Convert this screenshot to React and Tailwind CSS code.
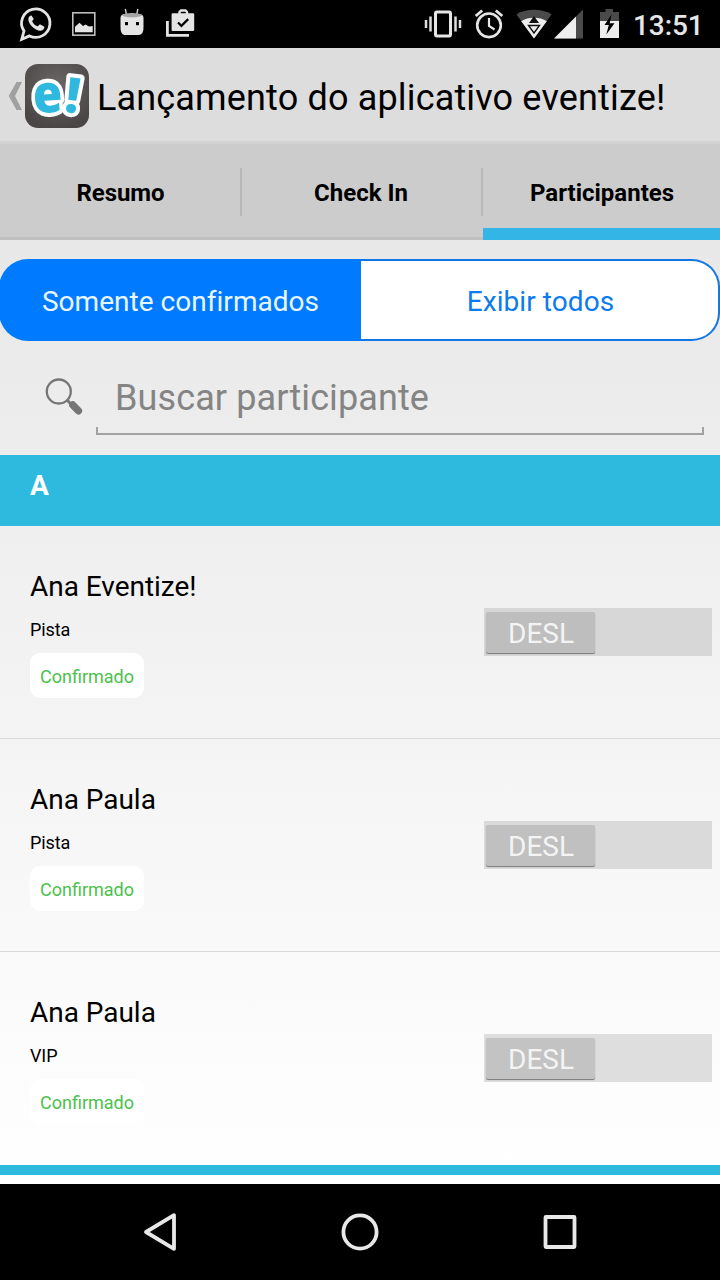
import React from "react";

const people = [
  { name: "Ana Eventize!", ticket: "Pista", thumb: "bg-[#bebebe]", track: "bg-[#d7d7d7]" },
  { name: "Ana Paula", ticket: "Pista", thumb: "bg-[#c0c0c0]", track: "bg-[#dadada]" },
  { name: "Ana Paula", ticket: "VIP", thumb: "bg-[#c3c3c3]", track: "bg-[#dedede]" },
];

function StatusBar() {
  return (
    <header className="flex h-12 shrink-0 items-center justify-between bg-black">
      <svg width="240" height="48" viewBox="0 0 240 48" fill="none">
        <path d="M21.700 39.300l2.300-8.200A14.200 14.200 0 1 1 29.500 35.900z" stroke="#e4e4e4" strokeWidth="2.800" />
        <path d="M31.500 15.600c-1-.3-3.200 1-3.200 3.700 0 4.700 6.700 11.600 12 11.500 2.300 0 4.200-1.800 4.100-4l-4.400-2.500c-1 .3-1.500 2.200-2.600 2-2.200-.7-4.300-2.900-5.200-4.900 0-.9 1.500-1.500 1.500-2.300z" fill="#e4e4e4" />
        <rect x="72.800" y="12.800" width="22" height="22.400" stroke="#bdbdbd" strokeWidth="1.600" />
        <path d="M75 32.300v-5.500l4.500-4 3.500 3.200 2.500-1.500 3.500 2 3.700-.5v6.300z" fill="#e4e4e4" />
        <path d="M126.500 14.500l-1.200-5.500M136.700 14.500l1.200-5.500" stroke="#cfcfcf" strokeWidth="1.400" />
        <path d="M120.500 18c0-2 1-3.500 3-3.800h17c2 .3 3 1.800 3 3.800v9c0 5.500-1.500 7.800-5 8h-13c-3.500 0-5-2.500-5-8z" fill="#e4e4e4" />
        <path d="M122 15.300c2-3 18-3 20 0-2 2.800-18 2.800-20 0z" fill="#a5a5a5" />
        <rect x="125" y="22" width="3" height="3.200" fill="#000" />
        <rect x="136" y="22" width="3" height="3.200" fill="#000" />
        <path d="M167.400 21v14.400H189" stroke="#e4e4e4" strokeWidth="2.800" />
        <rect x="171.600" y="13.300" width="22.600" height="17.700" rx="1.200" fill="#e4e4e4" />
        <path d="M179.500 14v-2l1.500-1.500h4.500l1.500 1.500v2" stroke="#e4e4e4" strokeWidth="2.400" />
        <path d="M178 22.500l3.400 3.400 6.800-6.800" stroke="#000" strokeWidth="2.200" />
      </svg>
      <div className="flex items-center pr-[17px]">
        <svg width="223" height="48" viewBox="410 0 223 48" fill="none">
          <rect x="435.500" y="12" width="15" height="24" rx="1.500" stroke="#e6e6e6" strokeWidth="3" />
          <path d="M426 20v8M460 20v8M430.500 16.500v15M455.500 16.500v15" stroke="#dedede" strokeWidth="2.500" />
          <circle cx="489" cy="25.300" r="11.800" stroke="#e6e6e6" strokeWidth="2.600" />
          <path d="M489 18v8l5.500 3.500" stroke="#e6e6e6" strokeWidth="2.200" />
          <path d="M475.700 16l6.500-5.500M502.300 16l-6.500-5.500" stroke="#e6e6e6" strokeWidth="2.800" />
          <path d="M534 38.500L516.500 14.500c9-6.200 26-6.200 35 0z" fill="#4a4a4a" />
          <path d="M534 38.500l-12.800-17.300c7-4.600 18.600-4.600 25.600 0z" fill="#eee" />
          <path d="M534 16l-5 7h10z" fill="#111" />
          <path d="M528.500 25.500h11l-5.500 7.500z" fill="#eee" stroke="#111" strokeWidth="1.400" />
          <path d="M583 9.500v29h-29z" fill="#4a4a4a" />
          <path d="M576 16.500v22h-22z" fill="#eee" />
          <path d="M600 12h5.500V9h7.500v3h6v9h-19z" fill="#4a4a4a" />
          <path d="M600 21h19v17h-19z" fill="#eee" />
          <path d="M611.500 14.500L604.500 25h4.300l-2.500 9.500 8.200-11.300h-4.800z" fill="#000" />
        </svg>
        <span className="flex h-12 w-[70px] items-center whitespace-nowrap pt-[3px] text-[28px] font-medium leading-none tracking-[-0.1px] text-[#e6e6e6]">13:51</span>
      </div>
    </header>
  );
}

function AppIcon() {
  return (
    <svg className="overflow-visible" width="64" height="64" viewBox="0 0 64 64">
      <defs>
        <radialGradient id="tile" cx="50%" cy="35%" r="65%">
          <stop offset="0" stopColor="#6c6867" />
          <stop offset="1" stopColor="#4a4646" />
        </radialGradient>
      </defs>
      <rect width="64" height="64" rx="13" fill="url(#tile)" />
      <g fontFamily="'Open Sans', sans-serif" fontWeight="800" fill="#2fb9df" stroke="#fff" strokeWidth="8" strokeLinejoin="round" style={{ paintOrder: "stroke" }}>
        <text fontSize="49" transform="translate(38.500 47.500) rotate(8)">!</text>
        <text fontSize="53" transform="translate(9 49.500) rotate(-4) scale(0.900 1)">e</text>
      </g>
    </svg>
  );
}

function ActionBar() {
  return (
    <div className="flex h-24 shrink-0 items-center border-b-[3px] border-[#d3d3d3] bg-[#dddddd] pt-[3px]">
      <svg className="ml-2 mr-[3px]" width="14" height="32" viewBox="0 0 14 32">
        <path d="M8.500 2H14L7 16l7 14H8.500L.7 16z" fill="#a0a0a0" />
      </svg>
      <AppIcon />
      <h1 className="ml-2 whitespace-nowrap pt-1 text-[36px] leading-none tracking-[0.160px] text-black">Lançamento do aplicativo eventize!</h1>
    </div>
  );
}

function Tabs() {
  return (
    <nav className="flex h-24 shrink-0 bg-[#cccccc] text-[24px] font-bold leading-none text-black">
      <div className="flex w-60 items-center justify-center border-b-[3px] border-[#c0c0c0] pl-px pt-1 tracking-[-0.100px]">Resumo</div>
      <div className="flex w-[243px] items-center border-b-[3px] border-[#c0c0c0] pt-0.5">
        <span className="h-12 w-0.5 bg-[#b8b8b8]" />
        <span className="flex-1 pr-px pt-0.5 text-center">Check In</span>
        <span className="h-12 w-0.5 bg-[#b8b8b8]" />
      </div>
      <div className="flex flex-1 items-center justify-center border-b-12 border-[#33b5e5] pl-px pt-[13px]">Participantes</div>
    </nav>
  );
}

function Participant({ name, ticket, thumb, track, last }) {
  return (
    <li className={last ? "flex h-[213px] justify-between pl-[30px] pr-2" : "flex h-[213px] justify-between border-b border-[#d9d9d9] pl-[30px] pr-2"}>
      <div className="flex flex-col items-start pt-[44px]">
        <span className="text-[28px] leading-[33px] tracking-[-0.030px] text-black">{name}</span>
        <span className="mt-[16px] text-[18px] leading-[22px] tracking-[-0.100px] text-black">{ticket}</span>
        <span className="mt-[12px] flex h-[45px] w-[114px] items-center justify-center rounded-[10px] bg-white pt-px text-[18px] text-[#4bc14b]">Confirmado</span>
      </div>
      <div className={"mt-[82px] flex h-12 w-[228px] pl-0.5 pt-1 " + track}>
        <span className={"flex h-[41px] w-[109px] items-center justify-center rounded-[2px] pl-px pt-[3px] text-[28px] leading-none text-[#f4f4f4] shadow-[0_1px_1px_#777] " + thumb}>DESL</span>
      </div>
    </li>
  );
}

export default function App() {
  return (
    <div className="flex h-[1280px] w-[720px] flex-col overflow-hidden bg-black font-[Roboto,sans-serif]">
      <StatusBar />
      <ActionBar />
      <Tabs />
      <main className="flex h-[944px] shrink-0 flex-col bg-linear-to-b from-[#e8e8e8] to-white">
        <div className="mt-[19px] flex h-[82px] shrink-0 text-[28px] leading-none">
          <button className="-ml-px w-[362px] rounded-l-[29px] bg-[#007aff] pl-px pt-[3px] tracking-[0.030px] text-[#e8f6ff]">Somente confirmados</button>
          <button className="flex-1 rounded-r-[28px] border-2 border-l-0 border-[#1276e4] bg-white pl-0.5 pt-[3px] tracking-[0.080px] text-[#0d7bf0]">Exibir todos</button>
        </div>
        <div className="flex h-[114px] shrink-0 pl-[44px] pr-4 pt-[36px]">
          <svg width="40" height="40" viewBox="44 377 40 40" fill="none">
            <circle cx="58.800" cy="391.500" r="12" stroke="#757575" strokeWidth="2.300" />
            <path d="M67.500 400.500l4 4" stroke="#757575" strokeWidth="3" />
            <path d="M72.800 405l5.600 5.800" stroke="#757575" strokeWidth="7.400" strokeLinecap="round" />
          </svg>
          <div className="ml-[12px] flex h-[58px] flex-1 flex-col">
            <span className="h-[50px] pl-[19px] pt-[3px] text-[36px] leading-[36px] tracking-[0.110px] text-[#848484]">Buscar participante</span>
            <span className="h-2 shrink-0 border-x-2 border-b-2 border-[#a2a2a2]" />
          </div>
        </div>
        <div className="h-[71px] shrink-0 bg-[#2ebadf] pl-[30px] pt-[14px] text-[28px] font-bold leading-[33px] text-white">A</div>
        <ul className="shrink-0">
          {people.map((p, i) => (
            <Participant key={i} {...p} last={i === people.length - 1} />
          ))}
        </ul>
        <div className="h-2.5 shrink-0 bg-[#2ebadf]" />
      </main>
      <footer className="flex h-24 shrink-0 items-center justify-center gap-[160px] bg-black">
        <svg width="40" height="40" viewBox="0 0 40 40" fill="none" stroke="#e8e8e8" strokeWidth="3.800" strokeLinejoin="round">
          <path d="M34 3.200v33.600L6 20z" />
        </svg>
        <svg width="40" height="40" viewBox="0 0 40 40" fill="none" stroke="#e8e8e8" strokeWidth="3.800">
          <circle cx="20" cy="20" r="16.600" />
        </svg>
        <svg width="40" height="40" viewBox="0 0 40 40" fill="none" stroke="#e8e8e8" strokeWidth="3.800" strokeLinejoin="round">
          <rect x="5.500" y="5" width="29" height="30" rx="0.500" />
        </svg>
      </footer>
    </div>
  );
}
